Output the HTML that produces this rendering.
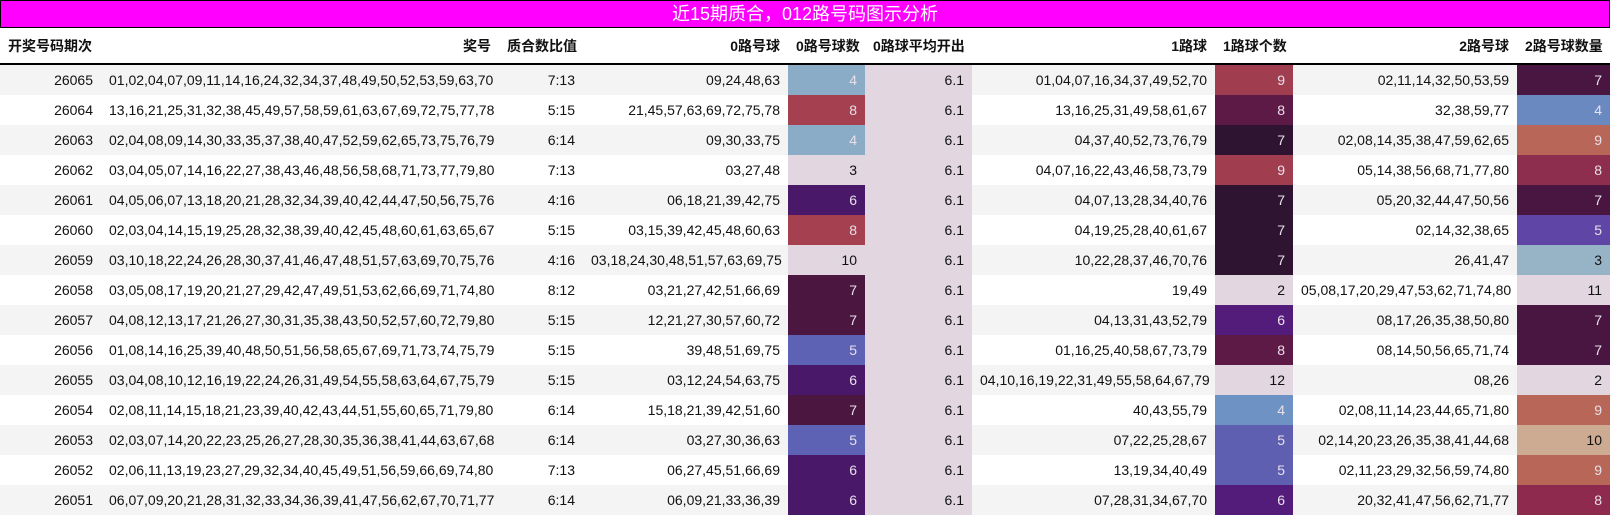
<!DOCTYPE html>
<html><head><meta charset="utf-8"><style>
body{margin:0;background:#fff;width:1610px;height:515px;overflow:hidden;font-family:"Liberation Sans","Noto Sans CJK SC",sans-serif;}
.title{height:26px;background:#ff00ff;border:1px solid #000;color:#fff;text-align:center;font-size:18px;line-height:26px;}
table{border-collapse:collapse;table-layout:fixed;width:1610px;font-size:14px;color:#111;}
th{height:35px;font-weight:bold;text-align:right;padding:0 8px;border-bottom:2px solid #000;white-space:nowrap;}
th:first-child{text-align:left;}
td{height:30px;padding:0 8px;text-align:right;white-space:nowrap;}
tbody tr:nth-child(odd) td{background:#f4f4f4;}
tbody tr:nth-child(even) td{background:#fff;}
tbody tr td.a{background:#e2d6e0;}
tbody tr td.c{color:#e8e0ea;}
</style></head><body>
<div class="title">近15期质合，012路号码图示分析</div>
<table>
<colgroup><col style="width:101px"><col style="width:398px"><col style="width:84px"><col style="width:205px"><col style="width:77px"><col style="width:107px"><col style="width:243px"><col style="width:78px"><col style="width:224px"><col style="width:93px"></colgroup>
<thead><tr><th>开奖号码期次</th><th>奖号</th><th>质合数比值</th><th>0路号球</th><th>0路号球数</th><th>0路球平均开出</th><th>1路球</th><th>1路球个数</th><th>2路号球</th><th>2路号球数量</th></tr></thead>
<tbody id="tb">
<tr><td>26065</td><td>01,02,04,07,09,11,14,16,24,32,34,37,48,49,50,52,53,59,63,70</td><td>7:13</td><td>09,24,48,63</td><td class="c" style="background:#8aacc6">4</td><td class="a">6.1</td><td>01,04,07,16,34,37,49,52,70</td><td class="c" style="background:#a03e50">9</td><td>02,11,14,32,50,53,59</td><td class="c" style="background:#481640">7</td></tr>
<tr><td>26064</td><td>13,16,21,25,31,32,38,45,49,57,58,59,61,63,67,69,72,75,77,78</td><td>5:15</td><td>21,45,57,63,69,72,75,78</td><td class="c" style="background:#a4404f">8</td><td class="a">6.1</td><td>13,16,25,31,49,58,61,67</td><td class="c" style="background:#5e1a47">8</td><td>32,38,59,77</td><td class="c" style="background:#6b89c1">4</td></tr>
<tr><td>26063</td><td>02,04,08,09,14,30,33,35,37,38,40,47,52,59,62,65,73,75,76,79</td><td>6:14</td><td>09,30,33,75</td><td class="c" style="background:#8aacc6">4</td><td class="a">6.1</td><td>04,37,40,52,73,76,79</td><td class="c" style="background:#2e1431">7</td><td>02,08,14,35,38,47,59,62,65</td><td class="c" style="background:#b86657">9</td></tr>
<tr><td>26062</td><td>03,04,05,07,14,16,22,27,38,43,46,48,56,58,68,71,73,77,79,80</td><td>7:13</td><td>03,27,48</td><td style="background:#e2d6e0">3</td><td class="a">6.1</td><td>04,07,16,22,43,46,58,73,79</td><td class="c" style="background:#a03e50">9</td><td>05,14,38,56,68,71,77,80</td><td class="c" style="background:#8e2e4e">8</td></tr>
<tr><td>26061</td><td>04,05,06,07,13,18,20,21,28,32,34,39,40,42,44,47,50,56,75,76</td><td>4:16</td><td>06,18,21,39,42,75</td><td class="c" style="background:#4a1869">6</td><td class="a">6.1</td><td>04,07,13,28,34,40,76</td><td class="c" style="background:#2e1431">7</td><td>05,20,32,44,47,50,56</td><td class="c" style="background:#481640">7</td></tr>
<tr><td>26060</td><td>02,03,04,14,15,19,25,28,32,38,39,40,42,45,48,60,61,63,65,67</td><td>5:15</td><td>03,15,39,42,45,48,60,63</td><td class="c" style="background:#a4404f">8</td><td class="a">6.1</td><td>04,19,25,28,40,61,67</td><td class="c" style="background:#2e1431">7</td><td>02,14,32,38,65</td><td class="c" style="background:#5f46a6">5</td></tr>
<tr><td>26059</td><td>03,10,18,22,24,26,28,30,37,41,46,47,48,51,57,63,69,70,75,76</td><td>4:16</td><td>03,18,24,30,48,51,57,63,69,75</td><td style="background:#e2d6e0">10</td><td class="a">6.1</td><td>10,22,28,37,46,70,76</td><td class="c" style="background:#2e1431">7</td><td>26,41,47</td><td style="background:#97b4c6">3</td></tr>
<tr><td>26058</td><td>03,05,08,17,19,20,21,27,29,42,47,49,51,53,62,66,69,71,74,80</td><td>8:12</td><td>03,21,27,42,51,66,69</td><td class="c" style="background:#4b1640">7</td><td class="a">6.1</td><td>19,49</td><td style="background:#e2d6e0">2</td><td>05,08,17,20,29,47,53,62,71,74,80</td><td style="background:#e2d6e0">11</td></tr>
<tr><td>26057</td><td>04,08,12,13,17,21,26,27,30,31,35,38,43,50,52,57,60,72,79,80</td><td>5:15</td><td>12,21,27,30,57,60,72</td><td class="c" style="background:#4b1640">7</td><td class="a">6.1</td><td>04,13,31,43,52,79</td><td class="c" style="background:#541c7a">6</td><td>08,17,26,35,38,50,80</td><td class="c" style="background:#481640">7</td></tr>
<tr><td>26056</td><td>01,08,14,16,25,39,40,48,50,51,56,58,65,67,69,71,73,74,75,79</td><td>5:15</td><td>39,48,51,69,75</td><td class="c" style="background:#5e62b5">5</td><td class="a">6.1</td><td>01,16,25,40,58,67,73,79</td><td class="c" style="background:#5e1a47">8</td><td>08,14,50,56,65,71,74</td><td class="c" style="background:#481640">7</td></tr>
<tr><td>26055</td><td>03,04,08,10,12,16,19,22,24,26,31,49,54,55,58,63,64,67,75,79</td><td>5:15</td><td>03,12,24,54,63,75</td><td class="c" style="background:#4a1869">6</td><td class="a">6.1</td><td>04,10,16,19,22,31,49,55,58,64,67,79</td><td style="background:#e2d6e0">12</td><td>08,26</td><td style="background:#e2d6e0">2</td></tr>
<tr><td>26054</td><td>02,08,11,14,15,18,21,23,39,40,42,43,44,51,55,60,65,71,79,80</td><td>6:14</td><td>15,18,21,39,42,51,60</td><td class="c" style="background:#4b1640">7</td><td class="a">6.1</td><td>40,43,55,79</td><td class="c" style="background:#6e92c3">4</td><td>02,08,11,14,23,44,65,71,80</td><td class="c" style="background:#b86657">9</td></tr>
<tr><td>26053</td><td>02,03,07,14,20,22,23,25,26,27,28,30,35,36,38,41,44,63,67,68</td><td>6:14</td><td>03,27,30,36,63</td><td class="c" style="background:#5e62b5">5</td><td class="a">6.1</td><td>07,22,25,28,67</td><td class="c" style="background:#5e5fb0">5</td><td>02,14,20,23,26,35,38,41,44,68</td><td style="background:#cdab93">10</td></tr>
<tr><td>26052</td><td>02,06,11,13,19,23,27,29,32,34,40,45,49,51,56,59,66,69,74,80</td><td>7:13</td><td>06,27,45,51,66,69</td><td class="c" style="background:#4a1869">6</td><td class="a">6.1</td><td>13,19,34,40,49</td><td class="c" style="background:#5e5fb0">5</td><td>02,11,23,29,32,56,59,74,80</td><td class="c" style="background:#b86657">9</td></tr>
<tr><td>26051</td><td>06,07,09,20,21,28,31,32,33,34,36,39,41,47,56,62,67,70,71,77</td><td>6:14</td><td>06,09,21,33,36,39</td><td class="c" style="background:#4a1869">6</td><td class="a">6.1</td><td>07,28,31,34,67,70</td><td class="c" style="background:#541c7a">6</td><td>20,32,41,47,56,62,71,77</td><td class="c" style="background:#8e2a4e">8</td></tr>
</tbody></table>
</body></html>
